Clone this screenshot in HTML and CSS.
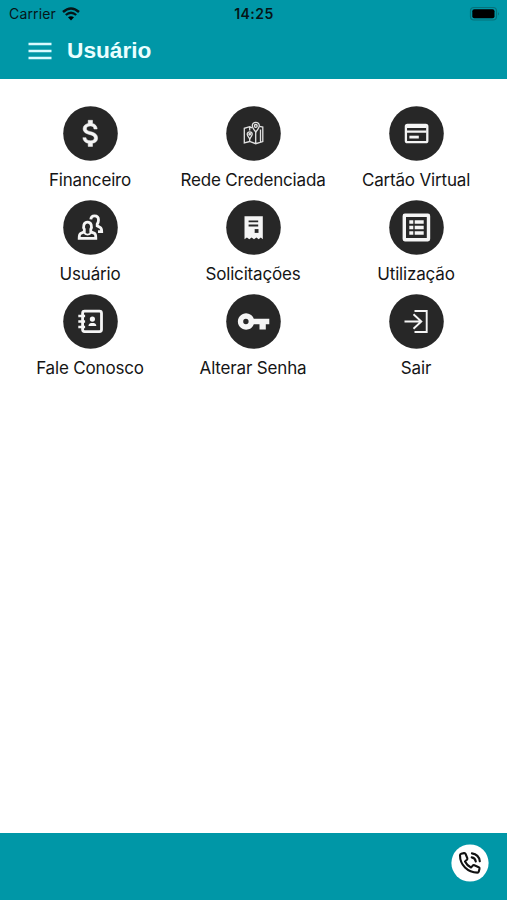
FILE: index.html
```html
<!DOCTYPE html>
<html lang="pt-BR">
<head>
<meta charset="utf-8">
<title>Usuário</title>
<link rel="stylesheet" href="styles.css">
</head>
<body>
<header class="header">
  <div class="status">
    <div class="carrier"><span>Carrier</span>
      <svg class="wifi" viewBox="0 0 18 14"><path d="M1 5Q9-2 17 5" fill="none" stroke="#061517" stroke-width="2.5"/><path d="M3.8 8Q9 3.4 14.2 8" fill="none" stroke="#061517" stroke-width="2.3"/><path d="M6 10.3Q9 8 12 10.3L9 13.5Z"/></svg>
    </div>
    <time class="clock">14:25</time>
    <svg class="battery" viewBox="0 0 32 16"><rect x="1.5" y="1.5" width="26" height="12.5" rx="3.5" fill="none" stroke="#06727b" stroke-width="1.2"/><rect x="3.3" y="3.3" width="22.2" height="9" rx="2"/><path d="M29 6q2 1.8 0 3.6z" fill="#06727b"/></svg>
  </div>
  <div class="titlebar">
    <svg class="burger" viewBox="0 0 24 18"><path d="M.5 2h23M.5 9h23M.5 16h23" stroke="#d9faff" stroke-width="2.3"/></svg>
    <h1 class="title">Usuário</h1>
  </div>
</header>
<main class="menu">
  <a class="item">
    <svg class="icon" viewBox="-27.5 -27.5 55 55"><circle r="27.3"/><path class="solid bold" transform="scale(1.45) translate(-11.6 -12.1)" d="M11.8 10.9c-2.27-.59-3-1.2-3-2.15 0-1.09 1.01-1.85 2.7-1.85 1.78 0 2.44.85 2.5 2.1h2.21c-.07-1.72-1.12-3.3-3.21-3.81V3h-3v2.16c-1.94.42-3.5 1.68-3.5 3.61 0 2.31 1.91 3.46 4.7 4.13 2.5.6 3 1.48 3 2.41 0 .69-.49 1.79-2.7 1.79-2.06 0-2.87-.92-2.98-2.1h-2.2c.12 2.19 1.76 3.42 3.68 3.83V21h3v-2.15c1.95-.37 3.5-1.5 3.5-3.55 0-2.84-2.43-3.81-4.7-4.4z"/></svg>
    <span class="label">Financeiro</span>
  </a>
  <a class="item">
    <svg class="icon" viewBox="-27.5 -27.5 55 55"><circle r="27.3"/><g class="thin"><path d="M-1.5-5.7-3.8-6.8-9.2-5.2V9.5L-3.8 8 2.2 10.2 9.3 8V-6.5L6-7.2M-3.8-6.8V-3M-3.8 4.5V8M2.2-1.5V10.2M7-4V8.5"/><path d="M2.3-1.5C.2-4-1.2-5.6-1.2-7.7a3.5 3.5 0 0 1 7 0c0 2.1-1.4 3.7-3.5 6.2z"/><circle class="ring" cx="2.3" cy="-7.6" r="1.4"/><path d="M-3.8 5.3C-5.4 3.4-6.3 2.4-6.3.8a2.5 2.5 0 0 1 5 0c0 1.6-.9 2.6-2.5 4.5z"/><circle class="ring" cx="-3.8" cy=".8" r=".8"/></g></svg>
    <span class="label">Rede Credenciada</span>
  </a>
  <a class="item">
    <svg class="icon" viewBox="-27.5 -27.5 55 55"><circle r="27.3"/><g class="line"><rect x="-10.6" y="-8.7" width="21.4" height="17.4" rx="1.5"/><path d="M-10-6.6H10M-10-1.8H10" stroke-width="2.2"/><rect x="-7.1" y="2.2" width="9.4" height="2.8" fill="#f5f5f5" stroke="none"/></g></svg>
    <span class="label">Cartão Virtual</span>
  </a>
  <a class="item">
    <svg class="icon" viewBox="-27.5 -27.5 55 55"><circle r="27.3"/><g class="line heavy"><path d="M.3-8.2C.5-10.5 2-11.6 4-11.6c2.7 0 4 1.8 4 4.1 0 2-.7 3.2-1.3 4.1V-1.7l3 1.6C11 .6 11.2 1.7 11.2 4.2H7.5"/><path d="M-6.2 1.7C-7 .8-7.1-1-6.6-2.7-6-4.7-4.8-5.4-3-5.4S.1-4.7.7-2.7C1.2-1 1 .8.3 1.7V4.3l3.7 1.6C5.1 6.4 5.3 8.4 5.3 10.8H-11.3C-11.3 8.4-11 6.4-9.9 5.9L-6.2 4.3Z"/><path d="M-6.5 5.4Q-3 8.8.8 5.4" stroke-width="1.7"/></g></svg>
    <span class="label">Usuário</span>
  </a>
  <a class="item">
    <svg class="icon" viewBox="-27.5 -27.5 55 55"><circle r="27.3"/><path class="solid" d="M-9-11.3H9.3V11.7L7.3 9.9 5.2 11.7 2.9 9.9.5 11.7-1.9 9.9-4.2 11.7-6.6 9.9-9 11.7Z"/><path d="M-4.9-6.2H4.7M-4.9-2H4.7" stroke="#272727" stroke-width="1.8"/><path d="M1.2 1.6H5V5.4H1.2Z"/></svg>
    <span class="label">Solicitações</span>
  </a>
  <a class="item">
    <svg class="icon" viewBox="-27.5 -27.5 55 55"><circle r="27.3"/><rect class="line frame" x="-12.2" y="-12.2" width="24.2" height="24.4" rx=".6"/><path class="solid" d="M-7.2-7.3h4v3.6h-4zM-1.8-7.3H7.2v3.6h-9zM-7.2-1.8h4v3.6h-4zM-1.8-1.8H7.2v3.6h-9zM-7.2 3.7h4v3.6h-4zM-1.8 3.7H7.2v3.6h-9z"/></svg>
    <span class="label">Utilização</span>
  </a>
  <a class="item">
    <svg class="icon" viewBox="-27.5 -27.5 55 55"><circle r="27.3"/><rect class="line heavy" x="-7.9" y="-10.3" width="18.9" height="20.4" rx="2"/><path class="line" d="M-12.2-5.5h6.8M-12.2 0h6.8M-12.2 5.5h6.8"/><circle class="solid" cx="1.9" cy="-2.4" r="2.6"/><path class="solid" d="M-2 4.5C-2 1.8 0 1.4 1.9 1.4S5.8 1.8 5.8 4.5Z"/></svg>
    <span class="label">Fale Conosco</span>
  </a>
  <a class="item">
    <svg class="icon" viewBox="-27.5 -27.5 55 55"><circle r="27.3"/><path class="solid" fill-rule="evenodd" d="M.3-2.7A8.2 8.2 0 1 0 .3 2.7H6V8H12.3V2.7H15.8V-2.7ZM-7.6-2.7a2.7 2.7 0 1 1 0 5.4a2.7 2.7 0 0 1 0-5.4z"/></svg>
    <span class="label">Alterar Senha</span>
  </a>
  <a class="item">
    <svg class="icon" viewBox="-27.5 -27.5 55 55"><circle r="27.3"/><path class="line light" d="M-2-10.5H10.2V10.5H-2M-12 0H4.8M-3-7.3 4.8 0-3 7.3"/></svg>
    <span class="label">Sair</span>
  </a>
</main>
<footer class="footer">
  <svg class="call" viewBox="-19 -19 38 38"><circle r="18.6" fill="#fff"/><g fill="none" stroke="#111" stroke-width="2.1" stroke-linecap="round" stroke-linejoin="round"><path d="M-8.8-9.3-6-9.9Q-4.8-10.1-4.4-9L-2.7-4.9Q-2.4-3.9-3.1-3.2L-5-1.5Q-3 2.6 1 4.5L2.8 2.6Q3.5 1.9 4.4 2.3L8.7 4.2Q9.7 4.7 9.5 5.7L8.8 8.5Q8.5 9.6 7.4 9.6C-2.4 9.6-10 2-10-7.7Q-10-9-8.8-9.3Z"/><path d="M1.9-9.6Q8.9-8.7 9.8-1.7M1.7-5.6Q5.1-5 5.8-1.5"/></g></svg>
</footer>
</body>
</html>
```
FILE: styles.css
```css
* { box-sizing: border-box; }
body {
  margin: 0;
  height: 900px;
  display: flex;
  flex-direction: column;
  background: #fff;
  font-family: Inter, "Liberation Sans", sans-serif;
  color: #151515;
}
svg { display: block; }
.header { height: 79px; flex: none; background: #0097a7; }
.status {
  height: 27px;
  padding: 0 6px 0 9px;
  display: grid;
  grid-template-columns: 1fr auto 1fr;
  align-items: center;
  color: #061517;
  font-size: 14px;
}
.carrier { display: flex; align-items: center; gap: 6px; letter-spacing: .15px; }
.wifi { width: 18px; height: 14px; }
.clock { font-weight: 600; letter-spacing: .5px; margin-right: 2px; }
.battery { width: 32px; height: 16px; justify-self: end; }
.titlebar { display: flex; align-items: center; height: 48px; padding-left: 28px; gap: 15px; }
.burger { width: 24px; height: 18px; }
.title {
  margin: -2px 0 0;
  color: #eaffff;
  font: bold 22.7px/26px "Liberation Sans", Arial, sans-serif;
}
.menu {
  flex: 1;
  display: grid;
  grid-template-columns: repeat(3, 163px);
  grid-auto-rows: 94.2px;
  align-content: start;
  padding: 26.5px 0 0 8.5px;
}
.item { display: flex; flex-direction: column; align-items: center; }
.icon { width: 55px; height: 55px; fill: #272727; }
.solid { fill: #f5f5f5; }
.bold { stroke: #f5f5f5; stroke-width: .35; }
.line { fill: none; stroke: #f5f5f5; stroke-width: 2.3; }
.heavy { stroke-width: 2.8; }
.frame { stroke-width: 3.4; }
.light { stroke-width: 1.9; }
.thin { fill: none; stroke: #e2e2e2; stroke-width: 1.3; }
.ring { fill: none; }
.label {
  margin-top: 8.5px;
  font-size: 17px;
  line-height: 22px;
  letter-spacing: -.17px;
  white-space: nowrap;
}
.footer {
  height: 67px;
  flex: none;
  background: #0097a7;
  display: flex;
  justify-content: flex-end;
  padding: 11px 18px 0 0;
}
.call { width: 38px; height: 38px; }
```
